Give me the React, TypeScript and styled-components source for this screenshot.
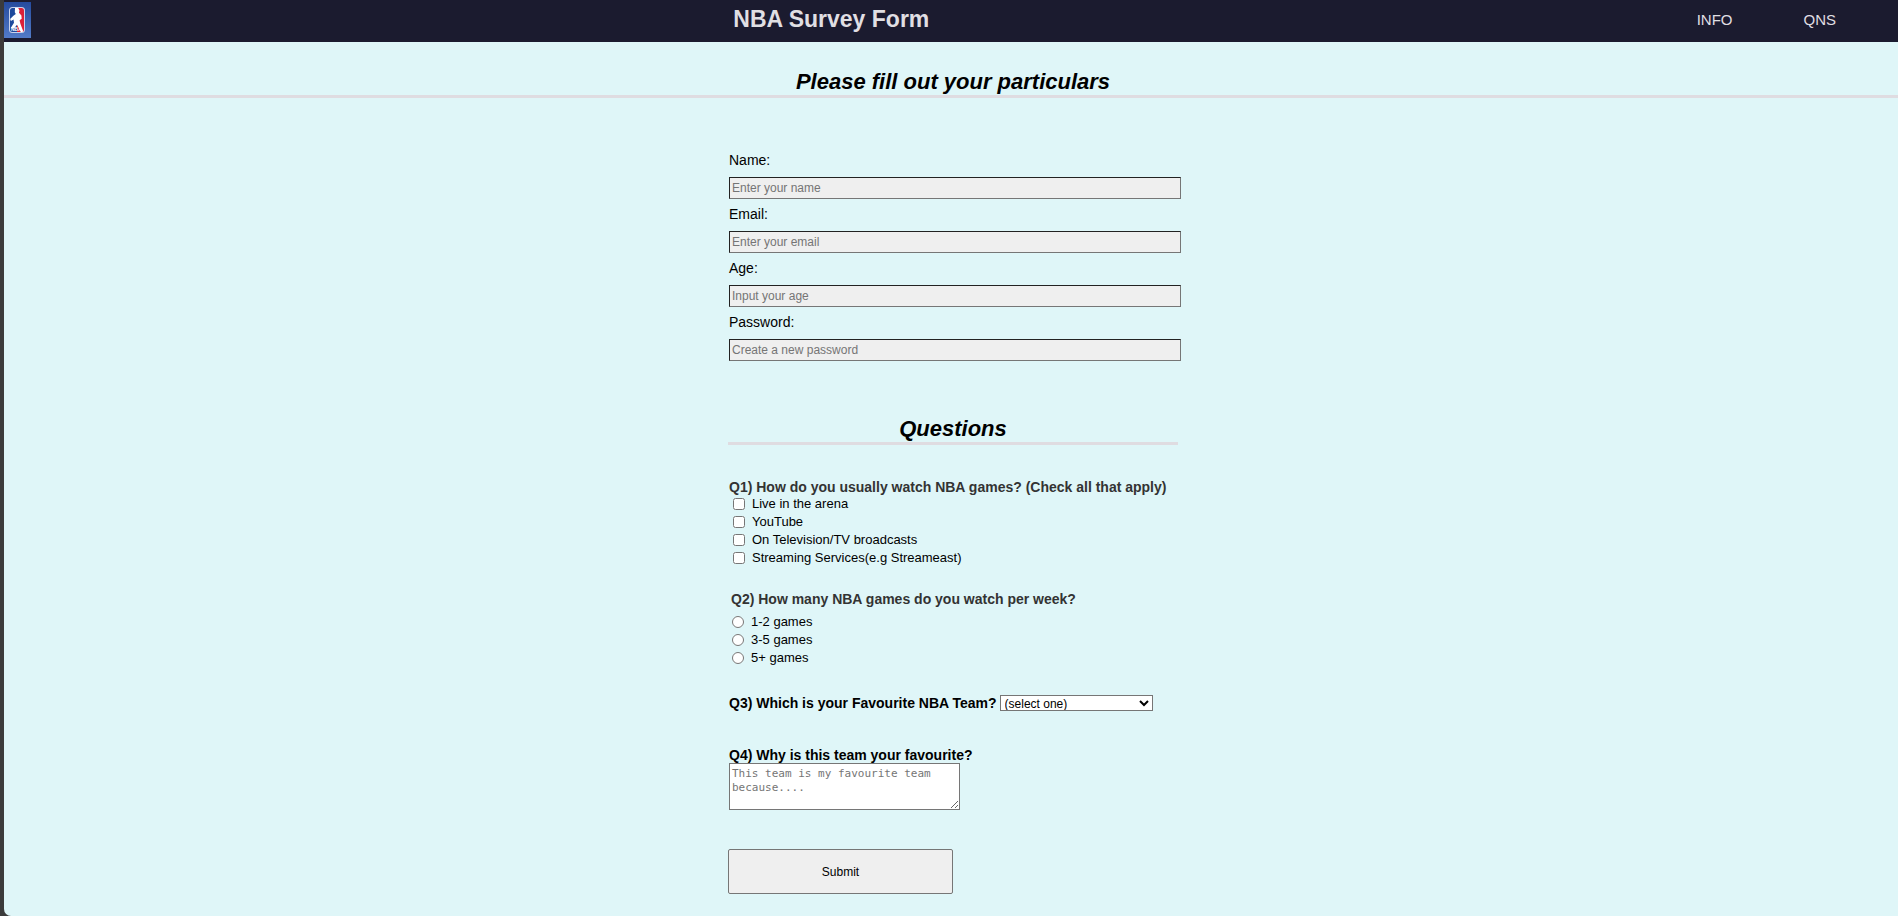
import React from "react";
import styled, { createGlobalStyle } from "styled-components";

const GlobalStyle = createGlobalStyle`
  *, *::before, *::after { box-sizing: border-box; }
  body {
    margin: 0;
    background: #3b3b3b;
    color: #000;
    font-family: Arial, "Liberation Sans", sans-serif;
    font-size: 14px;
    line-height: 16px;
  }
`;

const Page = styled.div`
  min-height: 100vh;
  margin-left: 4px;
  padding-bottom: 22px;
  background: #dff6f8;
  border-radius: 0 0 0 7px;
`;

const Header = styled.header`
  display: flex;
  justify-content: space-between;
  height: 42px;
  padding: 2px 0;
  background: #1b1b2f;
  color: #e0dfe3;
`;

const Logo = styled.svg`
  display: block;
  width: 27px;
  height: 36px;
`;

const Title = styled.h1`
  margin: 0;
  font-size: 23px;
  line-height: 34px;
`;

const Nav = styled.nav`
  display: flex;
  gap: 71px;
  padding: 10px 62px 0 65px;
`;

const NavLink = styled.a`
  color: inherit;
  text-decoration: none;
  font-size: 15px;
  line-height: 16px;
`;

const SectionTitle = styled.h2`
  margin: 0;
  padding-left: ${({ $inset = 0 }: { $inset?: number }) => $inset}px;
  border-bottom: 3px solid #dfdce1;
  font-size: 22px;
  font-style: italic;
  line-height: 26px;
  text-align: center;
`;

const Intro = styled.div`
  padding-top: 27px;
`;

const Content = styled.div`
  padding-left: 4px;
`;

const Form = styled.form`
  width: 100%;
  max-width: 450px;
  margin: 0 auto;
`;

const Fields = styled.div`
  display: grid;
  gap: 7px;
  padding: 54px 0 55px 1px;
`;

const Field = styled.div`
  display: grid;
  gap: 9px;
`;

const TextInput = styled.input`
  width: calc(100% + 3px);
  height: 22px;
  padding: 1px 2px;
  border: 1px solid;
  border-color: #222 #767676 #767676 #222;
  border-radius: 0;
  background: #efefef;
  font: 12px Arial, "Liberation Sans", sans-serif;

  &::placeholder { color: #757575; }
`;

const Group = styled.fieldset`
  min-width: 0;
  margin: 0;
  padding: ${({ $top }: { $top: number }) => $top}px 0 0 1px;
  border: 0;
`;

const Legend = styled.legend`
  float: left;
  width: 100%;
  padding: 0 0 0 ${({ $indent = 0 }: { $indent?: number }) => $indent}px;
  color: #333;
  font-weight: bold;
`;

const Options = styled.div`
  clear: both;
  padding: ${({ $top = 0 }: { $indent: number; $top?: number }) => $top}px 0 0
    ${({ $indent }) => $indent}px;
`;

const Option = styled.label`
  display: flex;
  align-items: center;
  gap: 7px;
  font-size: 13px;
  line-height: 18px;

  input {
    width: 12px;
    height: 12px;
    margin: 0;
  }
`;

const Question = styled.label`
  font-weight: bold;
`;

const TeamRow = styled.div`
  display: flex;
  align-items: center;
  gap: 3px;
  padding: 28px 0 0 1px;
`;

const TeamSelect = styled.select`
  width: 153px;
  height: 16px;
  padding: 0;
  border: 1px solid #767676;
  border-radius: 0;
  background: #fff;
  color: #000;
  font: 12px Arial, "Liberation Sans", sans-serif;
`;

const Reason = styled.div`
  display: flex;
  flex-direction: column;
  align-items: flex-start;
  padding: 36px 0 0 1px;
`;

const ReasonInput = styled.textarea`
  width: 231px;
  height: 47px;
  padding: 3px 2px;
  border: 1px solid #767676;
  border-radius: 0;
  background: #fff;
  font: 11px/14px "DejaVu Sans Mono", monospace;
  resize: both;

  &::placeholder { color: #757575; }
`;

const Submit = styled.button`
  display: block;
  width: 50%;
  height: 45px;
  margin-top: 39px;
  border: 1px solid #767676;
  border-radius: 2px;
  background: #efefef;
  color: #000;
  font: 12px Arial, "Liberation Sans", sans-serif;
`;

const fields = [
  { id: "name", label: "Name:", type: "text", hint: "Enter your name" },
  { id: "email", label: "Email:", type: "email", hint: "Enter your email" },
  { id: "age", label: "Age:", type: "number", hint: "Input your age" },
  { id: "password", label: "Password:", type: "password", hint: "Create a new password" },
];

const platforms = [
  "Live in the arena",
  "YouTube",
  "On Television/TV broadcasts",
  "Streaming Services(e.g Streameast)",
];

const frequencies = ["1-2 games", "3-5 games", "5+ games"];

function LeagueLogo() {
  return (
    <Logo viewBox="0 0 27 36" role="img" aria-label="NBA">
      <defs>
        <linearGradient id="sky" x1="0" y1="0" x2="0" y2="1">
          <stop offset="0" stopColor="#254b9e" />
          <stop offset="1" stopColor="#527bc7" />
        </linearGradient>
        <clipPath id="badge">
          <rect x="6" y="6" width="14" height="24" rx="2.5" />
        </clipPath>
      </defs>
      <rect width="27" height="36" fill="url(#sky)" />
      <rect x="5" y="5" width="16" height="26" rx="3.5" fill="#c9d4ec" />
      <g clipPath="url(#badge)">
        <rect x="6" y="6" width="8" height="24" fill="#1e4a9c" />
        <rect x="13" y="6" width="8" height="24" fill="#dc2038" />
        <path
          d="M11 6h3.2l1.3 2.5-.5 2.3 2.4 2.6.3 3.4-2.1 1.4.8 3.6 3.1 8.2h-2.7l-3.8-7.3-2.8 3.6H6.6l3.4-5.5-.5-3.3-2.6 1.4-.8-2 3.3-3.2 2.4-1.7-1-1.8z"
          fill="#fff"
        />
      </g>
      <text x="7" y="29" fontSize="5" fontWeight="bold" fill="#fff">NBA</text>
    </Logo>
  );
}

export default function App() {
  return (
    <>
      <GlobalStyle />
      <Page>
        <Header>
          <LeagueLogo />
          <Title>NBA Survey Form</Title>
          <Nav>
            <NavLink href="#info">INFO</NavLink>
            <NavLink href="#qns">QNS</NavLink>
          </Nav>
        </Header>
        <main>
          <Intro id="info">
            <SectionTitle $inset={4}>Please fill out your particulars</SectionTitle>
          </Intro>
          <Content>
            <Form onSubmit={(event) => event.preventDefault()}>
              <Fields>
                {fields.map(({ id, label, type, hint }) => (
                  <Field key={id}>
                    <label htmlFor={id}>{label}</label>
                    <TextInput id={id} name={id} type={type} placeholder={hint} />
                  </Field>
                ))}
              </Fields>
              <SectionTitle id="qns">Questions</SectionTitle>
              <Group $top={34}>
                <Legend>Q1) How do you usually watch NBA games? (Check all that apply)</Legend>
                <Options $indent={4}>
                  {platforms.map((name) => (
                    <Option key={name}>
                      <input type="checkbox" name="platform" value={name} />
                      {name}
                    </Option>
                  ))}
                </Options>
              </Group>
              <Group $top={24}>
                <Legend $indent={2}>Q2) How many NBA games do you watch per week?</Legend>
                <Options $indent={3} $top={6}>
                  {frequencies.map((name) => (
                    <Option key={name}>
                      <input type="radio" name="frequency" value={name} />
                      {name}
                    </Option>
                  ))}
                </Options>
              </Group>
              <TeamRow>
                <Question htmlFor="team">Q3) Which is your Favourite NBA Team?</Question>
                <TeamSelect id="team" name="team">
                  <option>(select one)</option>
                </TeamSelect>
              </TeamRow>
              <Reason>
                <Question htmlFor="reason">Q4) Why is this team your favourite?</Question>
                <ReasonInput
                  id="reason"
                  name="reason"
                  placeholder="This team is my favourite team because...."
                />
              </Reason>
              <Submit type="submit">Submit</Submit>
            </Form>
          </Content>
        </main>
      </Page>
    </>
  );
}
